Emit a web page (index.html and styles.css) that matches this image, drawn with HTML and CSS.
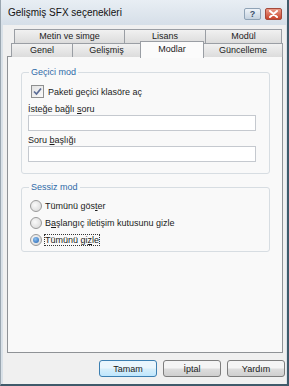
FILE: index.html
```html
<!DOCTYPE html>
<html lang="tr">
<head>
    <meta charset="UTF-8">
    <title>Gelişmiş SFX seçenekleri</title>
    <link rel="stylesheet" href="styles.css">
</head>
<body>
    <div class="window">
        <div class="titlebar">
            <span class="title">Gelişmiş SFX seçenekleri</span>
            <div class="caption-buttons">
                <span class="cap-btn help">?</span>
                <span class="cap-btn close">
                    <svg width="9" height="8" viewBox="0 0 9 8">
                        <path d="M1 1 L8 7 M8 1 L1 7" stroke="#fff" stroke-width="2" stroke-linecap="round"/>
                    </svg>
                </span>
            </div>
        </div>

        <div class="client">
            <div class="tabs">
                <div class="tab-row back">
                    <div class="tab tab-metin">Metin ve simge</div>
                    <div class="tab tab-lisans">Lisans</div>
                    <div class="tab tab-modul">Modül</div>
                </div>
                <div class="tab-row front">
                    <div class="tab tab-genel">Genel</div>
                    <div class="tab tab-gelismis">Gelişmiş</div>
                    <div class="tab tab-modlar active">Modlar</div>
                    <div class="tab tab-guncelleme">Güncelleme</div>
                </div>
            </div>

            <div class="panel">
                <fieldset class="group group-temp">
                    <legend>Geçici mod</legend>
                    <div class="check-row">
                        <span class="checkbox checked">
                            <svg width="9" height="9" viewBox="0 0 9 9">
                                <path d="M1 4.5 L3.5 7 L8 1.5" fill="none" stroke="#5b6c96" stroke-width="1.7"/>
                            </svg>
                        </span>
                        <span>Paketi <u>g</u>eçici klasöre aç</span>
                    </div>
                    <label class="field-label">İsteğe bağlı <u>s</u>oru</label>
                    <input type="text" class="field">
                    <label class="field-label">Soru <u>b</u>aşlığı</label>
                    <input type="text" class="field">
                </fieldset>

                <fieldset class="group group-silent">
                    <legend>Sessiz mod</legend>
                    <div class="radio-row">
                        <span class="radio"></span>
                        <span>Tümünü gös<u>t</u>er</span>
                    </div>
                    <div class="radio-row">
                        <span class="radio"></span>
                        <span>B<u>a</u>şlangıç iletişim kutusunu gizle</span>
                    </div>
                    <div class="radio-row">
                        <span class="radio selected"></span>
                        <span class="focused">Tümünü gi<u>z</u>le</span>
                    </div>
                </fieldset>
            </div>

            <div class="buttons">
                <button class="btn default">Tamam</button>
                <button class="btn">İptal</button>
                <button class="btn">Yardım</button>
            </div>
        </div>
    </div>
</body>
</html>
```

FILE: styles.css
```css
body {
    margin: 0;
    font-family: "Liberation Sans", Arial, sans-serif;
    font-size: 9px;
    color: #1b1b1b;
    background: #e9eef3;
}

.window {
    width: 289px;
    height: 386px;
    box-sizing: border-box;
    background: #d9e1e8;
    border-left: 1px solid #9aa6b0;
    border-right: 2px solid #3f5a6a;
    border-bottom: 2px solid #3f5a6a;
    display: flex;
    flex-direction: column;
}

.titlebar {
    height: 25px;
    display: flex;
    align-items: center;
    justify-content: space-between;
    padding: 0 5px 0 7px;
    background: linear-gradient(#e8eef4, #d6dfe8);
}

.title {
    font-size: 10px;
    color: #111;
    padding-bottom: 1px;
}

.caption-buttons {
    display: flex;
    gap: 4px;
    padding-top: 3px;
}

.cap-btn {
    width: 17px;
    height: 12px;
    box-sizing: border-box;
    border-radius: 2px;
    display: flex;
    align-items: center;
    justify-content: center;
}

.help {
    border: 1px solid #8fa3b6;
    background: linear-gradient(#eef3f8, #c5d2df);
    color: #39506a;
    font-size: 9px;
    font-weight: bold;
}

.close {
    border: 1px solid #a5493a;
    background: linear-gradient(#eb9b88, #c8432b);
}

.client {
    flex: 1;
    margin: 0 1px 0 2px;
    background: #f0f0f0;
    padding: 4px 0 0 4px;
    display: flex;
    flex-direction: column;
}

.tabs {
    display: flex;
    flex-direction: column;
    position: relative;
    z-index: 1;
}

.tab-row {
    display: flex;
    height: 14px;
}

.tab-row.back {
    margin-left: 7px;
}

.tab-row.front {
    margin-left: 4px;
}

.tab {
    box-sizing: border-box;
    border: 1px solid #9a9ea4;
    border-bottom: none;
    background: linear-gradient(#f1f1f1, #dcdcdc);
    text-align: center;
    line-height: 13px;
    margin-right: -1px;
}

.tab-metin { width: 111px; }
.tab-lisans { width: 82px; }
.tab-modul { width: 77px; }
.tab-genel { width: 62px; }
.tab-gelismis { width: 69px; }
.tab-modlar { width: 64px; }
.tab-guncelleme { width: 80px; }

.tab.active {
    background: #fbfbfb;
    height: 17px;
    margin-top: -2px;
    line-height: 14px;
    position: relative;
}

.panel {
    width: 276px;
    height: 297px;
    box-sizing: border-box;
    margin-top: -1px;
    border: 1px solid #8f9296;
    background: #f9f9f9;
    padding: 0 12px 0 13px;
}

.group {
    border: 1px solid #d7dde2;
    border-radius: 3px;
    margin: 0;
    padding: 0 11px 7px 6px;
}

.group legend {
    color: #2f6aa8;
    padding: 0 2px;
    margin-left: 1px;
    line-height: 11px;
}

.group-temp {
    margin-top: 10px;
}

.group-silent {
    margin-top: 8px;
    padding-top: 4px;
    padding-bottom: 3px;
}

.check-row {
    display: flex;
    align-items: center;
    gap: 4px;
    height: 13px;
    margin: 7px 0 6px 3px;
}

.checkbox {
    width: 13px;
    height: 13px;
    box-sizing: border-box;
    border: 1px solid #8e8f8f;
    background: linear-gradient(135deg, #e2e2e2, #fafafa);
    display: flex;
    align-items: center;
    justify-content: center;
}

.field-label {
    display: block;
    line-height: 11px;
}

.field {
    display: block;
    width: 228px;
    height: 16px;
    box-sizing: border-box;
    border: 1px solid #c5c9cf;
    background: #fff;
    margin: 0 0 4px 0;
}

.radio-row {
    display: flex;
    align-items: center;
    gap: 3px;
    height: 17px;
    padding-left: 2px;
}

.radio {
    width: 12px;
    height: 12px;
    box-sizing: border-box;
    border-radius: 50%;
    border: 1px solid #9a9a9a;
    background: radial-gradient(circle at 40% 40%, #fafafa, #d4d4d4);
    position: relative;
}

.radio.selected::after {
    content: "";
    position: absolute;
    left: 2px;
    top: 2px;
    width: 6px;
    height: 6px;
    border-radius: 50%;
    background: radial-gradient(circle at 40% 35%, #8ec2f0, #1f5fb0);
}

.focused {
    outline: 1px dotted #333;
    outline-offset: 0;
}

.buttons {
    display: flex;
    justify-content: flex-end;
    gap: 6px;
    margin-top: 7px;
    padding-right: 1px;
}

.btn {
    width: 58px;
    height: 17px;
    box-sizing: border-box;
    border: 1px solid #7d7d7d;
    border-radius: 3px;
    background: linear-gradient(#f4f4f4 45%, #dcdcdc 55%, #cfcfcf);
    font-family: "Liberation Sans", Arial, sans-serif;
    font-size: 9px;
    color: #1b1b1b;
    padding: 0;
}

.btn.default {
    border-color: #3c7fb1;
    background: linear-gradient(#eaf6fd 45%, #d6eefa 55%, #bee6fd);
}
```
